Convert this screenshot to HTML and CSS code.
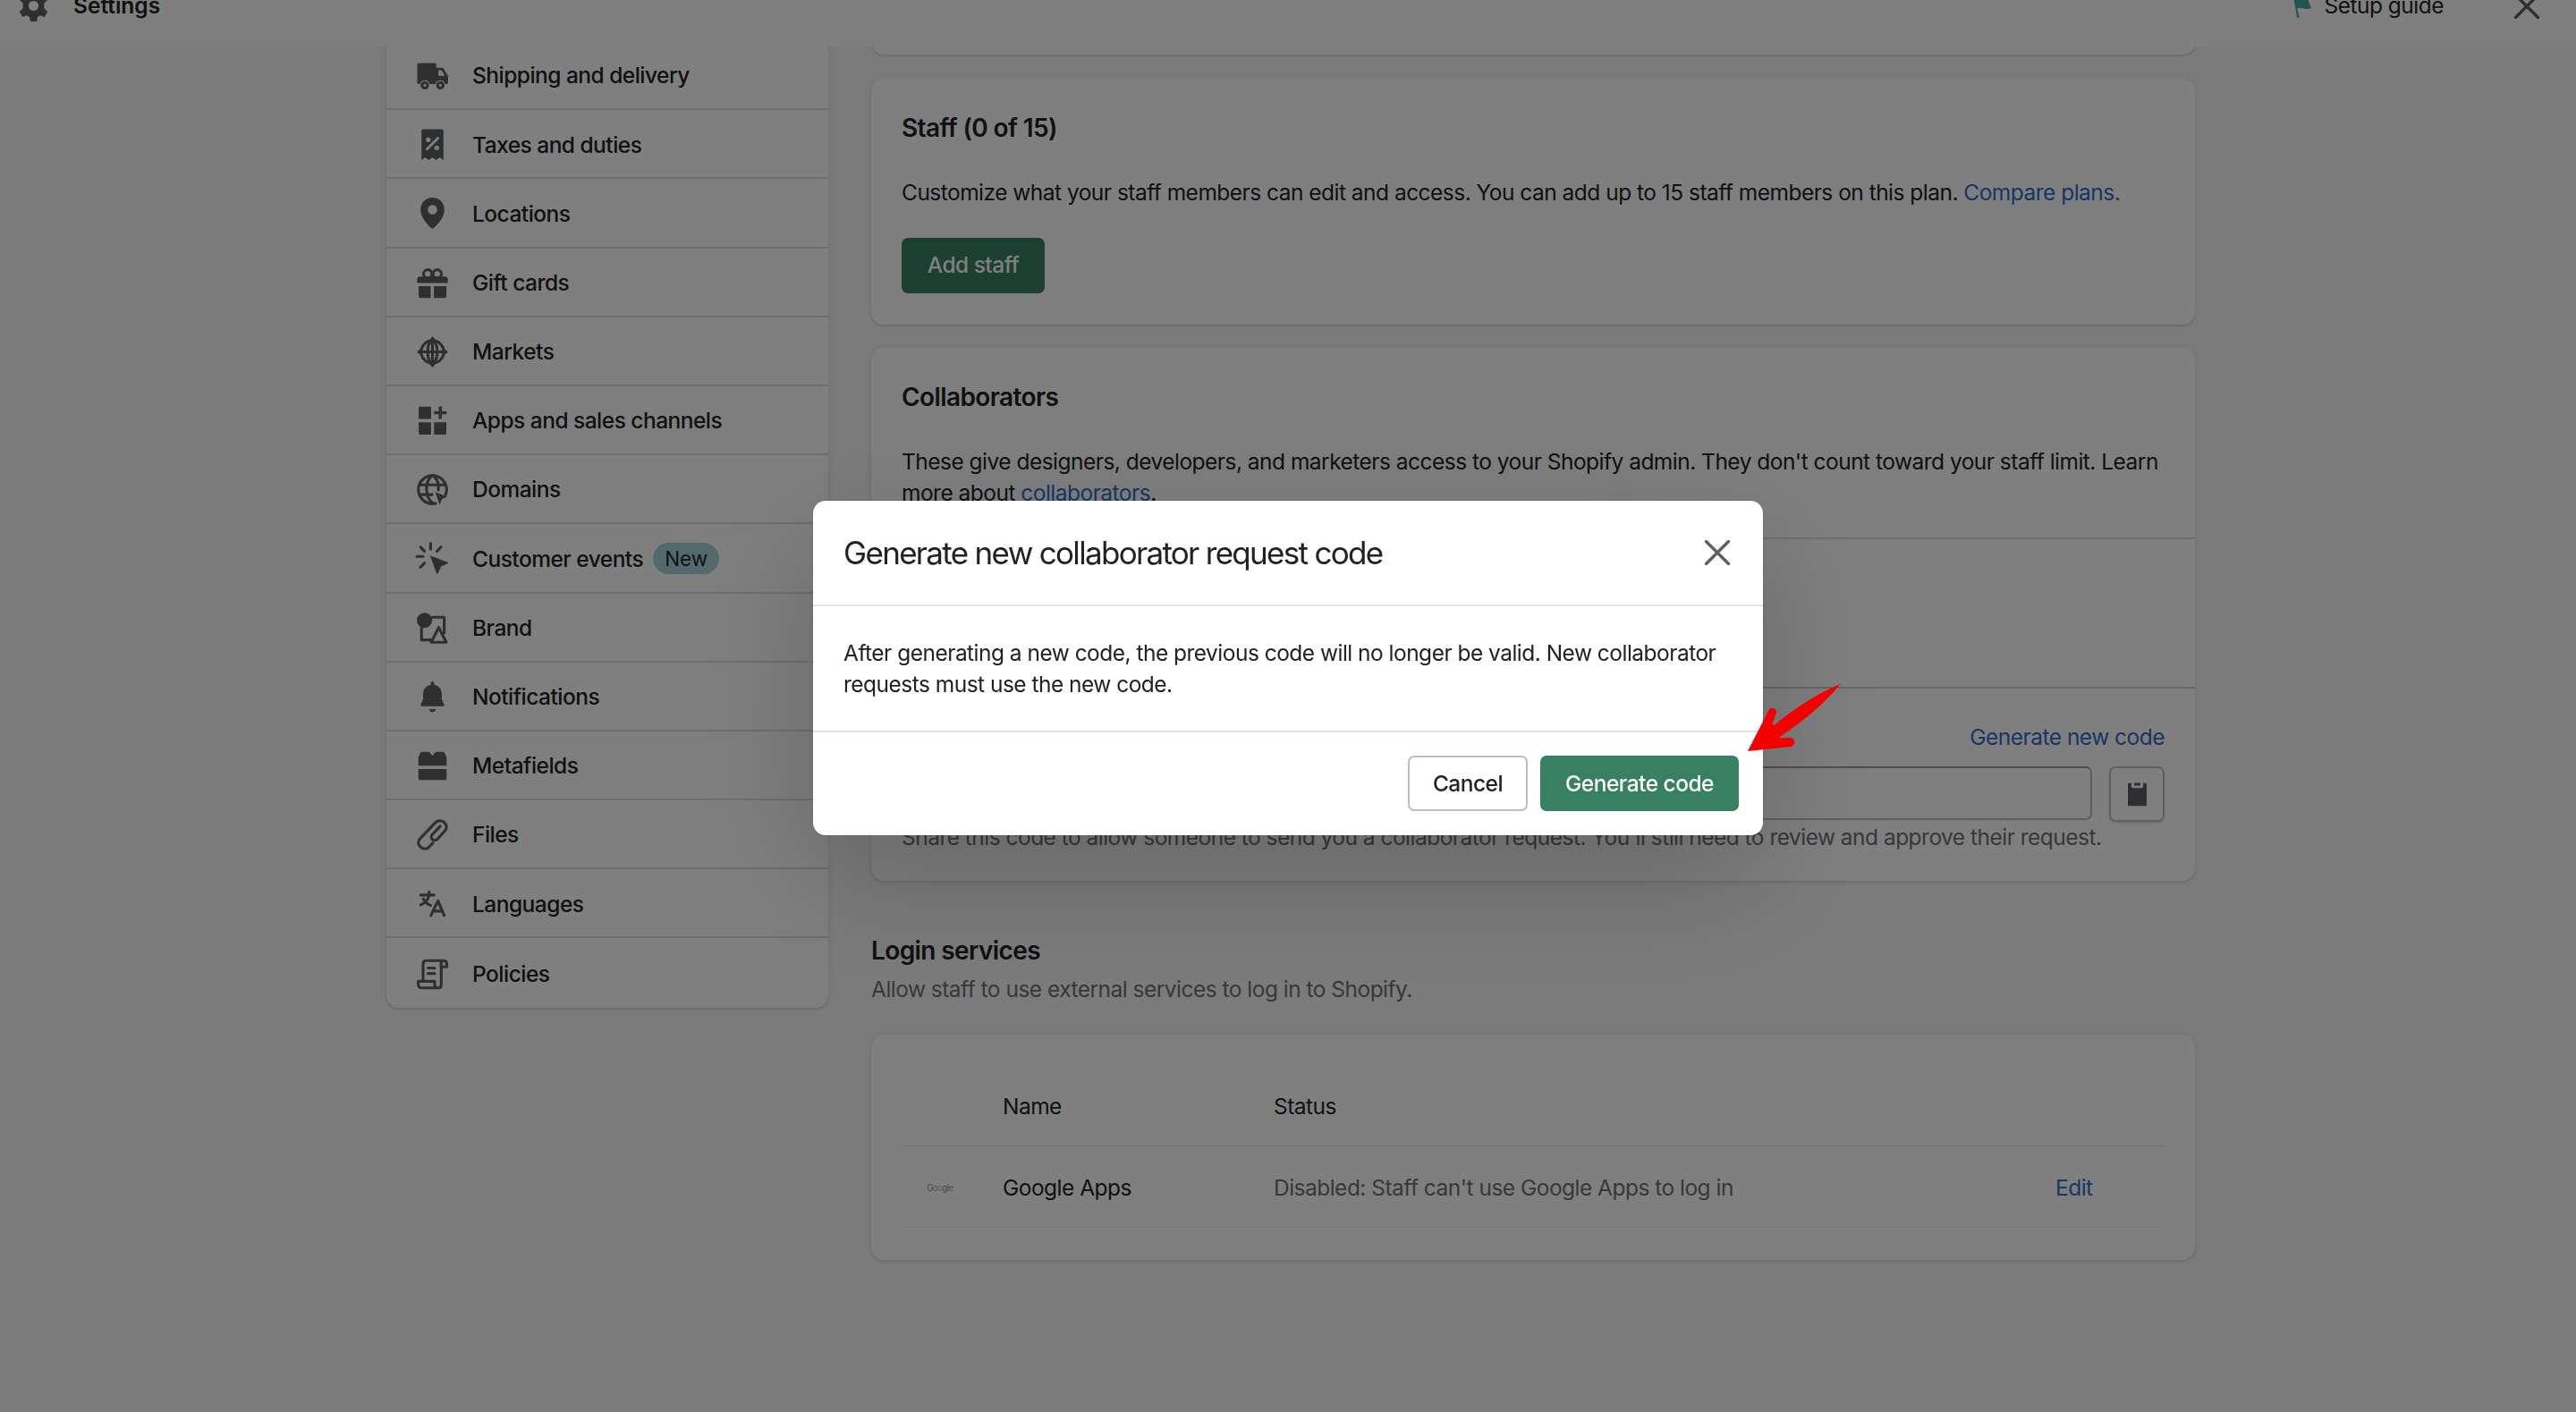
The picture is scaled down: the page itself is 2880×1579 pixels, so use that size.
FILE: index.html
```html
<!DOCTYPE html>
<html lang="en">
<head>
    <meta charset="UTF-8">
    <meta name="viewport" content="width=device-width, initial-scale=1.0">
    <title>Settings</title>
    <link rel="stylesheet" href="styles.css">
</head>
<body>
    <header class="topbar">
        <svg class="icon" viewBox="0 0 20 20"><path fill-rule="evenodd" d="M8 0h4l.6 2.900 1.600.9L17 2.800l2 3.500-2.200 2v3.400l2.200 2-2 3.500-2.800-1-1.600.9L12 20H8l-.6-2.900-1.600-.9-2.800 1-2-3.500 2.200-2V8.300L1 6.300l2-3.500 2.800 1 1.600-.9zM10 6.800a3.200 3.200 0 1 0 0 6.400 3.200 3.200 0 0 0 0-6.400z"/></svg>
        <h1 class="topbar-title">Settings</h1>
        <a class="setup-guide">
            <svg class="flag" viewBox="0 0 24 40"><path d="M0 7c7-4 12 3 22 0l-2 10 4 10c-7 4-12-1-18 1l3 11-3 1z"/></svg>
            Setup guide
        </a>
        <svg class="close" viewBox="0 0 28 28"><path d="M1.500 1.500l25 25M26.500 1.500l-25 25"/></svg>
    </header>

    <div class="page">
        <nav class="nav">
            <a class="nav-item">
                <svg class="icon" viewBox="0 0 20 20"><path fill-rule="evenodd" d="M1.300 2h10.200c.6 0 1 .4 1 1v2H16c.5 0 .9.200 1.100.6l2.600 4.300c.2.400.3.700.3 1.100v3.400c0 .6-.4 1-1 1h-.9a3.200 3.200 0 0 0-6.200 0H8.200a3.200 3.200 0 0 0-6.200 0h-.7c-.6 0-1-.4-1-1V3c0-.6.4-1 1-1zm12.500 4.600v3.600h4l-2-3.600z"/><circle class="line" cx="5.100" cy="16.200" r="1.800"/><circle class="line" cx="15" cy="16.200" r="1.800"/></svg>
                Shipping and delivery
            </a>
            <a class="nav-item">
                <svg class="icon" viewBox="0 0 20 20"><path d="M4 .3h12a1 1 0 0 1 1 1V20l-2.300-1.700L12.300 20 10 18.300 7.700 20l-2.400-1.700L3 20V1.300a1 1 0 0 1 1-1z"/><path class="knock" d="M13.500 6l-7 7"/><circle class="hole" cx="7.300" cy="7" r="1.500"/><circle class="hole" cx="12.700" cy="12.200" r="1.500"/></svg>
                Taxes and duties
            </a>
            <a class="nav-item">
                <svg class="icon" viewBox="0 0 20 20"><path fill-rule="evenodd" d="M10 0C5.600 0 2.400 3.300 2.400 7.700c0 5.600 5.300 10.300 7 11.900.3.300.9.300 1.200 0 1.700-1.600 7-6.300 7-11.900C17.600 3.300 14.400 0 10 0zm0 4.700a3 3 0 1 1 0 6 3 3 0 0 1 0-6z"/></svg>
                Locations
            </a>
            <a class="nav-item">
                <svg class="icon" viewBox="0 0 20 20"><path d="M1.200 5.800h17.600l1 1.200v3H.2V7zM1.200 12h7.700v7.600H2.400c-.7 0-1.200-.5-1.200-1.200zM10.900 12h8v6.400c0 .7-.5 1.200-1.200 1.200h-6.800z"/><circle class="line" cx="7" cy="4.200" r="2.700"/><circle class="line" cx="13" cy="4.200" r="2.700"/></svg>
                Gift cards
            </a>
            <a class="nav-item">
                <svg class="icon" viewBox="0 0 20 20"><g class="line"><circle cx="10" cy="10" r="7.200"/><ellipse cx="10" cy="10" rx="3.100" ry="7.200"/><path d="M2 10h16M10 2v16"/></g><path d="M10 0l2.600 3H7.400zM10 20l2.600-3H7.400zM0 10l3-2.600v5.200zM20 10l-3-2.600v5.200z"/></svg>
                Markets
            </a>
            <a class="nav-item">
                <svg class="icon" viewBox="0 0 20 20"><path d="M2.200 1h6.900v7.900H1.200V2a1 1 0 0 1 1-1zM1.200 11h7.900v7.900H2.200a1 1 0 0 1-1-1zM11 11h7.900v6.900a1 1 0 0 1-1 1H11zM14 .9h2v3h3v2h-3v3h-2v-3h-3v-2h3z"/></svg>
                Apps and sales channels
            </a>
            <a class="nav-item">
                <svg class="icon" viewBox="0 0 20 20"><g class="line"><path d="M18.300 13.500A9 9 0 1 0 12 18.800"/><path d="M1.800 7h16.400M1.800 13.200h8M10.500 19C4.800 14.500 5 5 9.700 1M10.500 1c2.800 2.500 3.700 6 3.300 9.200"/></g><path d="M11.800 11.500l7.500 3-3.200 1.500-1.500 3.700z"/></svg>
                Domains
            </a>
            <a class="nav-item">
                <svg class="icon" viewBox="0 0 20 20"><path d="M8.500 8.200l11.300 4.200c.4.200.4.700 0 .9l-4.300 1.900-2 4.400c-.2.400-.7.400-.9 0z"/><path class="line" d="M8.800.3V4M2.400 2.800l2.500 2.600M15.500 2.600l-2.600 2.800M0 8.700h4M2.300 15.600l2.600-2.600"/></svg>
                Customer events <span class="badge">New</span>
            </a>
            <a class="nav-item">
                <svg class="icon" viewBox="0 0 20 20"><circle cx="4.900" cy="5" r="4.900"/><path class="line" d="M10 3h7.500v10M3 10v7.500h7M14 9.500L18.800 19H9.200z"/></svg>
                Brand
            </a>
            <a class="nav-item">
                <svg class="icon" viewBox="0 0 20 20"><path d="M10 0c.7 0 1.100.5 1.100 1.100v1C14 2.600 16 5 16 8v3.400l1.500 3.400c.2.500-.1 1.100-.7 1.100H3.200c-.6 0-.9-.6-.7-1.100L4 11.400V8c0-3 2-5.400 4.900-5.900v-1C8.900.5 9.300 0 10 0zM8 17.700h4c0 1.200-.9 2-2 2s-2-.8-2-2z"/></svg>
                Notifications
            </a>
            <a class="nav-item">
                <svg class="icon" viewBox="0 0 20 20"><path d="M3.400 1h4.500L10 3.600 12.100 1h4.500c.5 0 .9.200 1.100.6l1.300 2.700V9.900H1V4.300l1.300-2.700c.2-.4.600-.6 1.100-.6zM1 12h18v5.800c0 .7-.5 1.200-1.200 1.200H2.200c-.7 0-1.200-.5-1.200-1.200z"/></svg>
                Metafields
            </a>
            <a class="nav-item">
                <svg class="icon" viewBox="0 0 20 20"><path class="line" d="M10.200 15.300l-2.300 2.500a3.800 3.800 0 0 1-5.700-.2c-1.600-1.600-1.500-3.700 0-5.200l9.500-10c1.800-1.800 4-1.800 5.700-.4 1.900 1.500 2 4 .4 5.700l-4.600 5c-1 1.100-2.400 1.100-3.300.3s-.8-2.200.1-3.300l5-5.200"/></svg>
                Files
            </a>
            <a class="nav-item">
                <svg class="icon" viewBox="0 0 20 20"><path class="line" d="M2.500 4.500h8.500M7.800 2.500V4.500c-.4 3-2.600 5.200-5.300 6.300M4.200 7c.8 2 2.500 3.300 4.600 4.100M9 17.500l4.500-9.300 4 9.300M10.500 14.800h5.700"/></svg>
                Languages
            </a>
            <a class="nav-item">
                <svg class="icon" viewBox="0 0 20 20"><path class="line" d="M4 13.500V3.300C4 2 4.800 1.300 6 1.300h11c1.300 0 2.100.8 2.100 2v2h-3.500v11.500c0 1.200-.8 1.900-2 1.900H3c-1.200 0-2.100-.8-2.100-2v-2.200h10.500v2.200c0 1.200.8 2 2 2M17 1.300c-.9 0-1.500.8-1.500 2v2M7.200 6h4.200M7.200 9.500h4.200"/></svg>
                Policies
            </a>
        </nav>

        <main class="main">
            <section class="card card-previous"></section>

            <section class="card staff">
                <h2>Staff (0 of 15)</h2>
                <p>Customize what your staff members can edit and access. You can add up to 15 staff members on this plan. <a class="link">Compare plans.</a></p>
                <button class="btn btn-primary">Add staff</button>
            </section>

            <section class="card collaborators">
                <div class="collab-intro">
                    <h2>Collaborators</h2>
                    <p>These give designers, developers, and marketers access to your Shopify admin. They don't count toward your staff limit. Learn<br>more about <a class="link">collaborators</a>.</p>
                </div>
                <div class="collab-options"></div>
                <div class="collab-code">
                    <a class="link code-link">Generate new code</a>
                    <div class="code-row">
                        <input class="code-input" type="text" readonly>
                        <button class="btn copy-btn">
                            <svg class="clipboard" viewBox="0 0 22 28"><path fill-rule="evenodd" d="M1.500 1H4v3.500C4 6 5 7 6.500 7h9C17 7 18 6 18 4.500V1h2.500L22 2v24.500c0 1-.5 1.500-1.500 1.500h-19C.500 28 0 27.500 0 26.500V2zM7.500 1h7v3h-7z"/></svg>
                        </button>
                    </div>
                    <p class="subdued">Share this code to allow someone to send you a collaborator request. You'll still need to review and approve their request.</p>
                </div>
            </section>

            <h2 class="login-title">Login services</h2>
            <p class="login-text subdued">Allow staff to use external services to log in to Shopify.</p>

            <section class="card services">
                <div class="service-row service-head">
                    <span></span>
                    <span>Name</span>
                    <span>Status</span>
                    <span></span>
                </div>
                <div class="service-row">
                    <span class="google"><i class="g-blue">G</i><i class="g-red">o</i><i class="g-yellow">o</i><i class="g-blue">g</i><i class="g-green">l</i><i class="g-red">e</i></span>
                    <span>Google Apps</span>
                    <span class="subdued">Disabled: Staff can't use Google Apps to log in</span>
                    <a class="link">Edit</a>
                </div>
            </section>
        </main>
    </div>

    <div class="backdrop">
        <div class="modal">
            <div class="modal-header">
                <h2 class="modal-title">Generate new collaborator request code</h2>
                <svg class="close" viewBox="0 0 28 28"><path d="M1.500 1.500l25 25M26.500 1.500l-25 25"/></svg>
            </div>
            <div class="modal-body">
                After generating a new code, the previous code will no longer be valid. New collaborator<br>requests must use the new code.
            </div>
            <div class="modal-footer">
                <button class="btn btn-cancel">Cancel</button>
                <button class="btn btn-primary btn-generate">Generate code</button>
            </div>
            <!-- red pointer over the confirm button -->
            <svg class="pointer" viewBox="0 0 106 78"><path d="M104.500 1C82 10 56 26 33 45c-3 3-5 2-4-1l4-11c1-4-4-7-8-4L1 76l48-5c6-2 6-9 0-10-5-1-10 2-12-1C60 45 88 22 104.500 1z"/></svg>
        </div>
    </div>
</body>
</html>
```

FILE: styles.css
```css
* {
    margin: 0;
    padding: 0;
    box-sizing: border-box;
}

body {
    height: 1579px;
    overflow: hidden;
    background-color: #f6f6f7;
    color: #202223;
    font-family: Inter, "Liberation Sans", sans-serif;
    font-size: 24.5px;
    line-height: 34.5px;
    letter-spacing: -0.52px;
    white-space: nowrap;
}

h2 {
    font-size: 28px;
    font-weight: 600;
    line-height: 42px;
    letter-spacing: -0.6px;
}

button {
    font: inherit;
    letter-spacing: inherit;
}

.icon {
    width: 35px;
    height: 35px;
    fill: #5c5f62;
    overflow: visible;
    flex: none;
}

.line {
    fill: none;
    stroke: #5c5f62;
    stroke-width: 1.8;
    stroke-linecap: round;
    stroke-linejoin: round;
}

.knock {
    stroke: #fff;
    stroke-width: 1.6;
    stroke-linecap: round;
}

.hole {
    fill: #fff;
}

.link {
    color: #2c6ecb;
}

.subdued {
    color: #6d7175;
}

/* Top bar, partly scrolled out of view */
.topbar {
    position: relative;
    z-index: 1;
    display: flex;
    align-items: center;
    height: 92px;
    margin-top: -40px;
    padding: 1px 41px 0 20px;
    background: #fff;
}

.topbar-title {
    margin-left: 27px;
    font-size: 24.5px;
    font-weight: 600;
    letter-spacing: 0;
}

.setup-guide {
    display: flex;
    align-items: center;
    gap: 15px;
    margin-left: auto;
    margin-right: 79px;
}

.flag {
    width: 21px;
    height: 35px;
    fill: #47a8a1;
    margin-top: -8px;
}

.close {
    width: 28px;
    height: 28px;
    stroke: #5c5f62;
    stroke-width: 3.4;
    stroke-linecap: round;
    flex: none;
}

.page {
    display: flex;
    align-items: flex-start;
    gap: 48px;
    padding-left: 432px;
}

/* Sidebar */
.nav {
    width: 494px;
    margin-top: -6px;
    background: #fff;
    border-radius: 0 0 14px 14px;
    box-shadow: 0 0 9px rgba(23, 24, 24, 0.06), 0 1px 3px rgba(0, 0, 0, 0.16);
}

.nav-item {
    display: flex;
    align-items: center;
    height: 77.2px;
    padding: 2px 0 0 34px;
    font-weight: 500;
    border-bottom: 2px solid #dcdddf;
}

.nav-item:last-child {
    border-bottom: none;
}

.nav-item .icon {
    margin-right: 27px;
}

.badge {
    height: 35px;
    margin-left: 11px;
    padding: 0 13px;
    border-radius: 18px;
    background: #a4d3dd;
    font-size: 22.5px;
    font-weight: 400;
    line-height: 35px;
    letter-spacing: 0;
}

/* Content */
.main {
    width: 1480px;
    margin-top: -31px;
}

.card {
    background: #fff;
    border-radius: 14px;
    box-shadow: 0 0 9px rgba(23, 24, 24, 0.05), 0 1px 3px rgba(0, 0, 0, 0.16);
}

.card-previous {
    height: 40px;
    margin-bottom: 27px;
}

.staff {
    height: 275px;
    padding: 34px 34px 0;
}

.staff p {
    margin: 34px 0 33px;
}

.btn {
    height: 62px;
    border: 2px solid #babfc3;
    border-radius: 7px;
    background: #fff;
    font-weight: 500;
    color: #202223;
}

.btn-primary {
    width: 160px;
    border: none;
    background: #378062;
    color: #fff;
}

.collaborators {
    height: 597px;
    margin-top: 25px;
}

.collab-intro {
    height: 215px;
    padding: 35px 34px 0;
    border-bottom: 2px solid #dcdddf;
}

.collab-intro p {
    margin-top: 34px;
}

.collab-options {
    height: 167px;
    border-bottom: 2px solid #c9cccf;
}

.collab-code {
    padding: 37px 34px 0;
}

.code-link {
    display: block;
    text-align: right;
}

.code-row {
    display: flex;
    gap: 19px;
    margin-top: 15px;
}

.code-input {
    flex: 1;
    height: 60px;
    border: 2px solid #babfc3;
    border-top-color: #999ea4;
    border-radius: 7px;
    background: #fff;
}

.copy-btn {
    display: flex;
    align-items: center;
    justify-content: center;
    width: 62px;
    box-shadow: 0 2px 2px rgba(0, 0, 0, 0.1);
}

.clipboard {
    width: 21px;
    height: 28px;
    fill: #5c5f62;
}

.login-title {
    margin-top: 57px;
}

.login-text {
    margin-top: 5px;
}

.services {
    height: 252px;
    margin-top: 33px;
    padding: 33px 34px 0;
}

.service-row {
    display: grid;
    grid-template-columns: 113px 303px 874px auto;
    align-items: center;
    height: 90px;
    padding-top: 4px;
    border-bottom: 2px solid #f6f6f7;
}

.service-head {
    height: 93px;
    border-bottom-color: #ececee;
}

.google {
    padding-left: 28px;
    font-size: 10px;
    letter-spacing: -0.7px;
}

.google i {
    font-style: normal;
}

.g-blue { color: #7b98d8; }
.g-red { color: #d8938c; }
.g-yellow { color: #dcc787; }
.g-green { color: #8fc09b; }

/* Dialog */
.backdrop {
    position: fixed;
    inset: 0;
    z-index: 2;
    background: rgba(0, 0, 0, 0.5);
}

.modal {
    position: absolute;
    top: 560px;
    left: 909px;
    width: 1062px;
    height: 374px;
    background: #fff;
    border-radius: 14px;
    box-shadow: 0 45px 140px rgba(0, 0, 0, 0.2), 0 0 2px rgba(0, 0, 0, 0.2);
}

.modal-header {
    display: flex;
    align-items: center;
    justify-content: space-between;
    height: 118px;
    padding: 0 37px 0 34px;
    border-bottom: 2px solid #e4e5e7;
}

.modal-title {
    font-size: 35px;
    font-weight: 400;
    letter-spacing: -1.69px;
}

.modal-body {
    height: 139px;
    padding: 35px 34px 0;
}

.modal-footer {
    display: flex;
    justify-content: flex-end;
    gap: 14px;
    padding: 26px 27px 0;
    border-top: 2px solid #dfe1e3;
}

.btn-cancel {
    width: 134px;
}

.btn-generate {
    width: 222px;
}

.pointer {
    position: absolute;
    top: 204px;
    left: 1044px;
    width: 106px;
    height: 78px;
    fill: #f30000;
}
```
